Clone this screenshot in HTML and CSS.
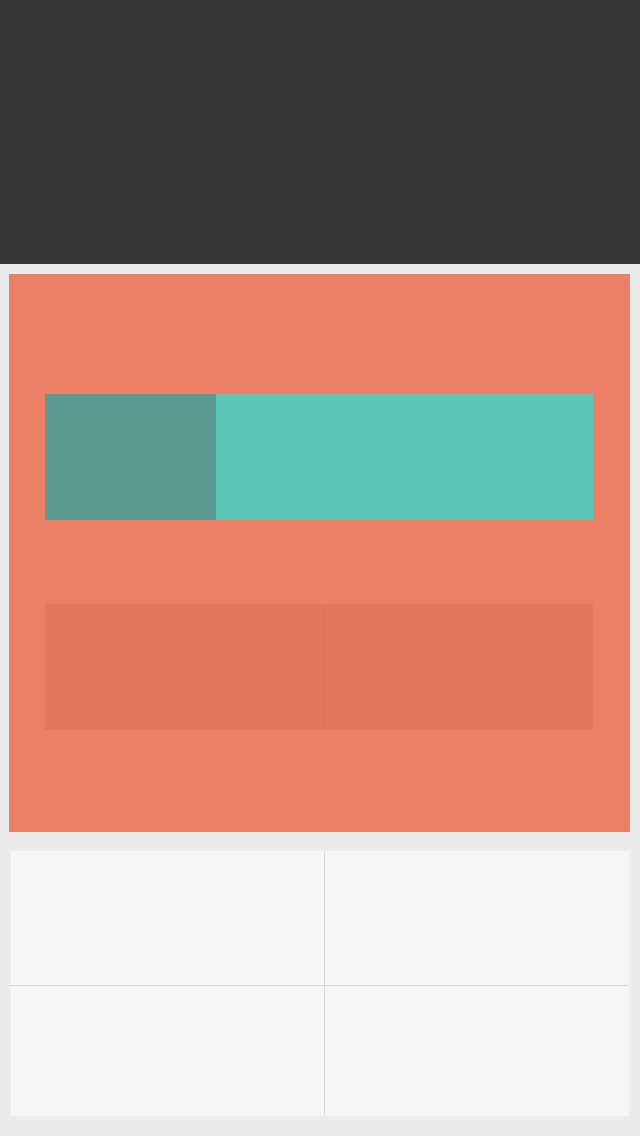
FILE: index.html
```html
<!DOCTYPE html>
<html>
<head>
<meta charset="utf-8">
<link rel="stylesheet" href="styles.css">
</head>
<body>
<header class="topbar"></header>
<main class="content">
  <section class="hero">
    <div class="progress">
      <div class="progress-done"></div>
      <div class="progress-rest"></div>
    </div>
    <div class="split">
      <div class="split-cell"></div>
      <div class="split-cell"></div>
    </div>
  </section>
  <section class="tiles">
    <div class="tile"></div>
    <div class="tile"></div>
    <div class="tile"></div>
    <div class="tile"></div>
  </section>
</main>
</body>
</html>
```
FILE: styles.css
```css
html, body {
  margin: 0;
  padding: 0;
  background: #ececec;
  font-family: "Liberation Sans", Arial, sans-serif;
}
.topbar {
  height: 264px;
  background: #353535;
}
.content {
  padding: 10px 10px 0 9px;
  display: flex;
  flex-direction: column;
}
.hero {
  background: #ec8066;
  height: 558px;
  padding: 120px 37px 0 36px;
  box-sizing: border-box;
  display: flex;
  flex-direction: column;
}
.progress {
  display: flex;
  height: 126px;
}
.progress-done {
  width: 171px;
  background: #5c9b91;
}
.progress-rest {
  flex: 1;
  background: #5dc8b8;
}
.split {
  margin-top: 84px;
  height: 126px;
  display: grid;
  grid-template-columns: 279px 1fr;
  gap: 1px;
  background: #dd7055;
}
.split-cell {
  background: #e3775c;
}
.tiles {
  margin: 19px 1px 0 1px;
  display: grid;
  grid-template-columns: 314px 1fr;
  grid-template-rows: 134px 130px;
  gap: 1px;
  background: #d9d9d9;
  box-shadow: 0 1px 0 #c6c6c6, 0 2px 0 #dadada, -1px 0 0 #e4e4e4;
}
.tile {
  background: #f6f6f6;
}
```
